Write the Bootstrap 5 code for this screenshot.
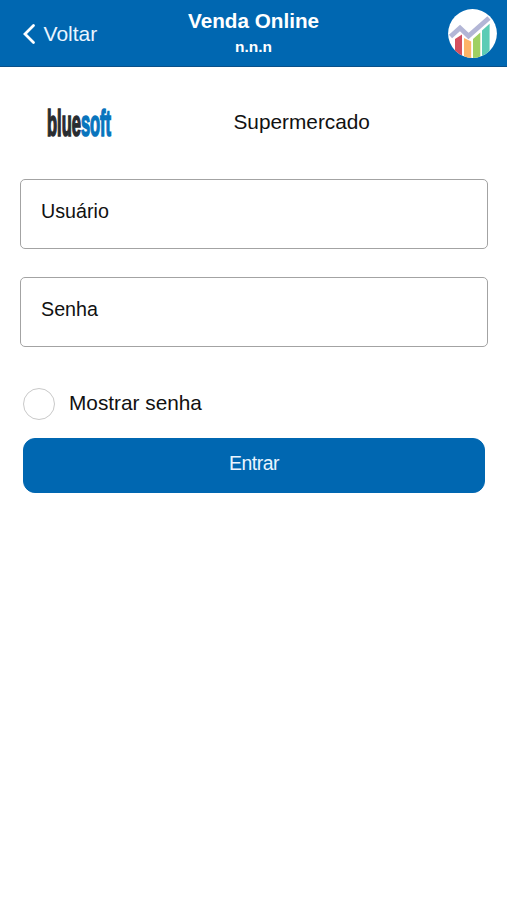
<!DOCTYPE html>
<html lang="pt-BR">
<head>
<meta charset="utf-8">
<meta name="viewport" content="width=device-width, initial-scale=1">
<title>Venda Online</title>
<link href="https://cdn.jsdelivr.net/npm/bootstrap@5.3.0/dist/css/bootstrap.min.css" rel="stylesheet">
<style>
  body { font-family: "Liberation Sans", Arial, sans-serif; color: #111; font-size: 20.8px; line-height: 24px; }
  .topbar { display: grid; grid-template-columns: 1fr auto 1fr; height: 67px; background: #0067b1; border-bottom: 1px solid #0a5089; padding: 0 10px; }
  .back { font-size: 21px; color: #eaf5ff; padding: 1px 0 0 13px; gap: 7.6px; }
  .heading { font-size: 20.7px; line-height: 24px; padding-top: 9px; }
  .version { font-size: 15.5px; line-height: 18px; padding-top: 5px; }
  .brand-row { height: 110px; margin-bottom: 2px; padding-left: 45px; }
  .company { padding-left: 120.5px; }
  .field { height: 70px; border: 1.5px solid #a3a3a3; border-radius: 5px; padding: 19px 20px; font-size: 19.7px; line-height: 24px; margin: 0 19px 28px 20px; }
  .field input { display: block; width: 100%; height: 24px; padding: 0; border: 0; outline: 0; background: transparent; color: #111; }
  .field input::placeholder { color: #111; opacity: 1; }
  .show-row { margin: 40px 23px 18px 23px; gap: 14px; height: 33px; }
  .show-row .form-check-input { width: 32px; height: 32px; margin: 0; border: 1.5px solid #c9c9c9; border-radius: 50%; }
  .show-row label { margin-top: -1px; }
  .enter { --bs-btn-bg: #0067b1; --bs-btn-border-color: #0067b1; --bs-btn-color: #eaf5ff; --bs-btn-hover-bg: #005b9d;
    display: block; margin: 0 22px 0 23px; width: calc(100% - 45px); height: 55px; border-radius: 12px; padding: 0 0 3px; font-size: 19.4px; letter-spacing: -.5px; }
</style>
</head>
<body class="bg-white">
<header class="topbar text-white">
  <a href="#" class="back d-flex align-items-center text-decoration-none">
    <svg width="13" height="22" viewBox="0 0 13 22" fill="none" stroke="#fff" stroke-width="2.8" stroke-linecap="round"><path d="M10.500 2.500 2 11l8.500 8.500"/></svg>
    <span>Voltar</span>
  </a>
  <div class="text-center">
    <div class="heading fw-bold">Venda Online</div>
    <div class="version fw-bold">n.n.n</div>
  </div>
  <div class="d-flex justify-content-end align-items-center">
    <svg width="50" height="50" viewBox="0 0 50 50">
      <defs><clipPath id="disc"><circle cx="25.500" cy="25.500" r="24.400"/></clipPath></defs>
      <circle cx="25.500" cy="25.500" r="24.400" fill="#fff"/>
      <g clip-path="url(#disc)">
        <path d="M8 31l7-4.500V50H8z" fill="#d4505f"/>
        <path d="M17 30l7.200 3.500V50H17z" fill="#fdb468"/>
        <path d="M26 31l7.300-6.500V50H26z" fill="#9fd062"/>
        <path d="M35 22.500l7.600-6.800V50H35z" fill="#5cccb5"/>
        <path d="M3.500 28.500L13 20 21.500 28 42 10" fill="none" stroke="#b3b6d6" stroke-width="4.800"/>
      </g>
    </svg>
  </div>
</header>
<main>
  <div class="brand-row d-flex align-items-center">
    <svg width="68" height="36" viewBox="0 0 68 36" role="img" aria-label="bluesoft" font-family="Liberation Sans, Arial, sans-serif" font-weight="700" font-size="36" overflow="visible">
      <text transform="translate(2 31.800) scale(.458 1.020)" fill="#292c30" stroke="#292c30" stroke-width="1.700">blue<tspan fill="#0874bd" stroke="#0874bd">soft</tspan></text>
    </svg>
    <span class="company">Supermercado</span>
  </div>
  <form>
    <div class="field"><input type="text" placeholder="Usuário" aria-label="Usuário"></div>
    <div class="field"><input type="password" placeholder="Senha" aria-label="Senha"></div>
    <div class="show-row d-flex align-items-center">
      <input class="form-check-input" type="checkbox" id="show">
      <label for="show">Mostrar senha</label>
    </div>
    <button type="button" class="btn enter">Entrar</button>
  </form>
</main>
<script src="https://cdn.jsdelivr.net/npm/bootstrap@5.3.0/dist/js/bootstrap.bundle.min.js"></script>
</body>
</html>
